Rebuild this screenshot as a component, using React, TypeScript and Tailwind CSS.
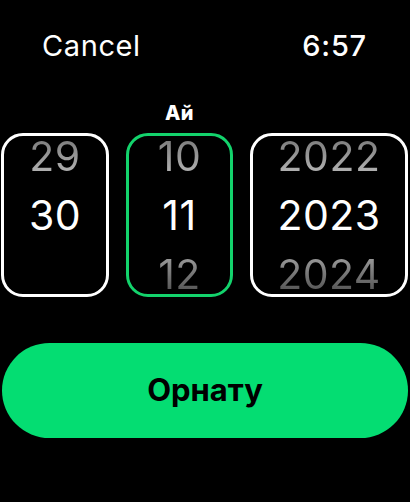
import React from "react";

type WheelProps = {
  items: (string | null)[];
  active?: boolean;
  width: string;
};

function Wheel({ items, active = false, width }: WheelProps) {
  return (
    <div
      className={`${width} h-[164px] rounded-[22px] border-[3px] overflow-hidden flex flex-col items-center justify-center ${
        active ? "border-[#13d36c]" : "border-white"
      }`}
    >
      {items.map((item, i) => (
        <div
          key={i}
          className={`h-[59px] shrink-0 flex items-center justify-center text-[41px] leading-none tracking-[0.5px] ${
            i === 1
              ? "text-white"
              : i === 0
              ? "bg-gradient-to-b from-[#6a6a6a] to-[#c8c8c8] bg-clip-text text-transparent"
              : "bg-gradient-to-b from-[#b4b4b4] to-[#3e3e3e] bg-clip-text text-transparent"
          }`}
        >
          {item ?? "\u00a0"}
        </div>
      ))}
    </div>
  );
}

export default function App() {
  return (
    <div
      className="w-[410px] h-[502px] bg-black text-white overflow-hidden flex flex-col"
      style={{ fontFamily: "Inter, 'Noto Sans', sans-serif" }}
    >
      {/* Top bar */}
      <div className="flex justify-between items-center pl-[42px] pr-[43px] pt-[27px] h-[64px]">
        <span className="text-[29px] font-normal tracking-[0.6px]">Cancel</span>
        <span className="text-[29px] font-medium tracking-[0.8px]">6:57</span>
      </div>

      {/* Label */}
      <div className="flex w-[233px] pl-[126px] justify-center items-end h-[69px] pb-[10px]">
        <span className="text-[20px] font-extrabold leading-none tracking-[0.5px]">Ай</span>
      </div>

      {/* Wheels */}
      <div className="flex pl-[1px] gap-[17px]">
        <Wheel width="w-[108px]" items={["29", "30", null]} />
        <Wheel width="w-[107px]" items={["10", "11", "12"]} active />
        <Wheel width="w-[158px]" items={["2022", "2023", "2024"]} />
      </div>

      {/* Button */}
      <div className="px-[2px] pt-[46px]">
        <button className="w-full h-[95px] rounded-full bg-[#04dd72] text-black text-[31px] font-bold flex items-center justify-center">
          Орнату
        </button>
      </div>
    </div>
  );
}
